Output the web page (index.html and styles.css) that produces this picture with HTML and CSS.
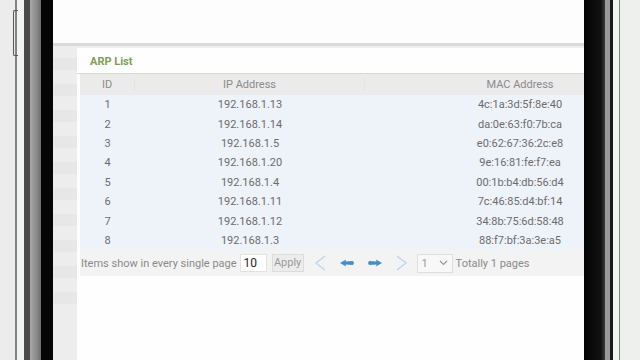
FILE: index.html
```html
<!DOCTYPE html>
<html>
<head>
<meta charset="utf-8">
<link rel="stylesheet" href="styles.css">
</head>
<body>
<div class="edge-left">
  <div class="side-btn"></div>
</div>
<div class="bezel-left">
  <div class="bz-light"></div>
  <div class="bz-dark"></div>
  <div class="bz-grey"></div>
  <div class="bz-black"></div>
</div>
<div class="screen">
  <div class="top-panel"></div>
  <div class="top-line"></div>
  <div class="main">
    <div class="sidebar">
      <div class="sb-band"></div><div class="sb-band"></div><div class="sb-band"></div><div class="sb-band"></div><div class="sb-band"></div><div class="sb-band"></div><div class="sb-band"></div><div class="sb-band"></div><div class="sb-band"></div><div class="sb-band"></div>
    </div>
    <div class="panel">
      <div class="title">ARP List</div>
      <div class="table">
        <div class="row head">
          <div class="c-id">ID</div><div class="c-ip">IP Address</div><div class="c-mac">MAC Address</div>
        </div>
        <div class="row"><div class="c-id">1</div><div class="c-ip">192.168.1.13</div><div class="c-mac">4c:1a:3d:5f:8e:40</div></div>
        <div class="row"><div class="c-id">2</div><div class="c-ip">192.168.1.14</div><div class="c-mac">da:0e:63:f0:7b:ca</div></div>
        <div class="row"><div class="c-id">3</div><div class="c-ip">192.168.1.5</div><div class="c-mac">e0:62:67:36:2c:e8</div></div>
        <div class="row"><div class="c-id">4</div><div class="c-ip">192.168.1.20</div><div class="c-mac">9e:16:81:fe:f7:ea</div></div>
        <div class="row"><div class="c-id">5</div><div class="c-ip">192.168.1.4</div><div class="c-mac">00:1b:b4:db:56:d4</div></div>
        <div class="row"><div class="c-id">6</div><div class="c-ip">192.168.1.11</div><div class="c-mac">7c:46:85:d4:bf:14</div></div>
        <div class="row"><div class="c-id">7</div><div class="c-ip">192.168.1.12</div><div class="c-mac">34:8b:75:6d:58:48</div></div>
        <div class="row"><div class="c-id">8</div><div class="c-ip">192.168.1.3</div><div class="c-mac">88:f7:bf:3a:3e:a5</div></div>
        <div class="pager">
          <span class="pg-label">Items show in every single page</span>
          <span class="pg-input">10</span>
          <span class="pg-btn">Apply</span>
          <svg class="pg-chev" width="14" height="18" viewBox="0 0 14 18"><path d="M12 2 L3 9 L12 16" fill="none" stroke="#bcd6ee" stroke-width="1.4"/></svg>
          <svg class="pg-arrow" width="16" height="10" viewBox="0 0 16 10"><path d="M1 5 L7 1.5 L6.5 3.6 L14 3 L15 5 L14 7 L6.5 6.4 L7 8.5 Z" fill="#3f8fd0"/></svg>
          <svg class="pg-arrow" width="16" height="10" viewBox="0 0 16 10"><path d="M15 5 L9 1.5 L9.5 3.6 L2 3 L1 5 L2 7 L9.5 6.4 L9 8.5 Z" fill="#3f8fd0"/></svg>
          <svg class="pg-chev" width="14" height="18" viewBox="0 0 14 18"><path d="M2 2 L11 9 L2 16" fill="none" stroke="#bcd6ee" stroke-width="1.4"/></svg>
          <span class="pg-select"><span>1</span><svg width="9" height="6" viewBox="0 0 9 6"><path d="M1 1 L4.5 4.5 L8 1" fill="none" stroke="#999" stroke-width="1.2"/></svg></span>
          <span class="pg-total">Totally 1 pages</span>
        </div>
      </div>
    </div>
  </div>
</div>
<div class="bezel-right">
  <div class="bz-black r1"></div>
  <div class="bz-grey r2"></div>
  <div class="bz-black r3"></div>
  <div class="bz-light r4"></div>
</div>
<div class="edge-right"></div>
</body>
</html>
```

FILE: styles.css
```css
html, body {
  margin: 0;
  padding: 0;
}
body {
  width: 640px;
  height: 360px;
  overflow: hidden;
  display: flex;
  background: #ededed;
  font-family: Roboto, "Liberation Sans", Arial, sans-serif;
}
.edge-left {
  width: 17px;
  background: #ececec;
  border-right: 2px solid #7c877c;
  box-sizing: border-box;
  position: relative;
}
.side-btn {
  position: absolute;
  left: 13px;
  top: 10px;
  width: 4px;
  height: 44px;
  border: 1px solid #555;
  border-right: none;
  border-radius: 2px 0 0 2px;
}
.bezel-left {
  width: 36px;
  display: flex;
}
.bz-light { width: 7px; background: #f2f2f2; }
.bz-dark { width: 6px; background: #4a4a4a; }
.bz-grey { width: 11px; background: linear-gradient(90deg, #a8a8a8, #8a8a8a 60%, #6e6e6e); }
.bz-black { width: 12px; background: #050505; }
.screen {
  width: 531px;
  display: flex;
  flex-direction: column;
  background: #efefef;
}
.top-panel {
  height: 43px;
  background: #fdfdfd;
}
.top-line {
  height: 3px;
  background: #dadada;
}
.main {
  flex: 1;
  display: flex;
}
.sidebar {
  width: 24px;
  background: #ededed;
  display: flex;
  flex-direction: column;
  gap: 14px;
  padding-top: 12px;
}
.sb-band {
  height: 12px;
  background: #e7e7e7;
}
.panel {
  flex: 1;
  margin-top: 2px;
  background: #fefefe;
  overflow: hidden;
}
.title {
  height: 25px;
  line-height: 28px;
  padding-left: 13px;
  font-size: 11px;
  font-weight: bold;
  color: #7f9d57;
  border-bottom: 1px solid #d6ddd0;
}
.table {
  margin-left: 3px;
  width: 595px;
}
.row {
  display: flex;
  height: 19.4px;
  align-items: center;
  background: #eef2f9;
  font-size: 11px;
  color: #6c6c6c;
}
.row.head {
  height: 21px;
  background: #ebebeb;
  color: #8a8a8a;
}
.c-id { width: 55px; text-align: center; }
.c-ip { width: 230px; text-align: center; }
.c-mac { width: 310px; text-align: center; }
.head .c-id { border-right: 1px solid #e4e4e4; box-sizing: border-box; }
.head .c-ip { border-right: 1px solid #e4e4e4; box-sizing: border-box; }
.pager {
  height: 26px;
  background: #f3f3f3;
  display: flex;
  align-items: center;
  padding-left: 1px;
  font-size: 11px;
  color: #8a8a8a;
  width: 503px;
}
.pg-label { margin-right: 3px; }
.pg-input {
  width: 27px;
  height: 18px;
  box-sizing: border-box;
  background: #fff;
  border: 1px solid #e2e2e2;
  color: #222;
  font-size: 12px;
  line-height: 16px;
  padding-left: 3px;
}
.pg-btn {
  margin-left: 5px;
  width: 32px;
  height: 18px;
  box-sizing: border-box;
  border: 1px solid #dcdcdc;
  background: #ececec;
  color: #9a9a9a;
  line-height: 16px;
  text-align: center;
}
.pg-chev { margin-left: 9px; }
.pg-arrow { margin-left: 12px; }
.pg-arrow + .pg-chev { margin-left: 12px; }
.pg-select {
  margin-left: 8px;
  width: 36px;
  height: 19px;
  box-sizing: border-box;
  border: 1px solid #dedede;
  background: #f8f8f8;
  display: flex;
  align-items: center;
  justify-content: space-between;
  padding: 0 4px 0 4px;
  color: #999;
}
.pg-total { margin-left: 3px; }
.bezel-right {
  width: 36px;
  display: flex;
}
.bz-black.r1 { width: 22px; background: linear-gradient(90deg, #030303, #111 80%, #3a3a3a); }
.bz-grey.r2 { width: 5px; background: #9a9a9a; }
.bz-black.r3 { width: 3px; background: #1a1a1a; }
.bz-light.r4 { width: 6px; background: #f4f4f4; border-right: 1px solid #7c877c; }
.edge-right {
  flex: 1;
  background: #eef0ed;
}
```
